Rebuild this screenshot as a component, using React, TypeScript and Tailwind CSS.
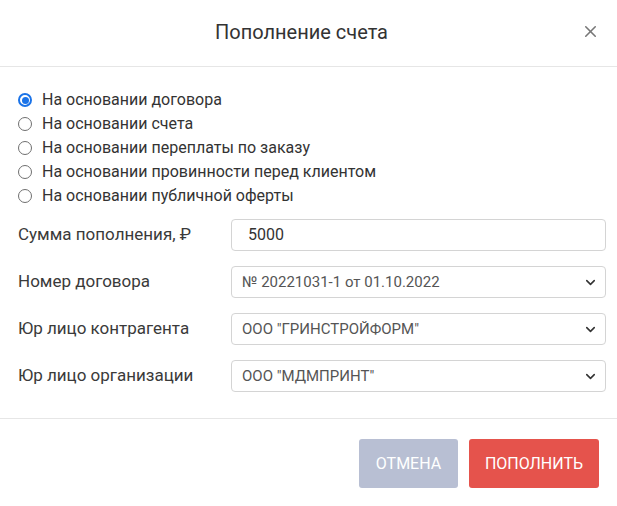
import { X, ChevronDown } from "lucide-react";

const options = [
  "На основании договора",
  "На основании счета",
  "На основании переплаты по заказу",
  "На основании провинности перед клиентом",
  "На основании публичной оферты",
];

const selects = [
  { label: "Номер договора", value: "№ 20221031-1 от 01.10.2022" },
  { label: "Юр лицо контрагента", value: 'ООО "ГРИНСТРОЙФОРМ"' },
  { label: "Юр лицо организации", value: 'ООО "МДМПРИНТ"' },
];

function Radio({ checked }: { checked: boolean }) {
  return checked ? (
    <span className="w-[14px] h-[14px] rounded-full border-2 border-[#1a73e8] bg-white flex items-center justify-center shrink-0">
      <span className="w-[7px] h-[7px] rounded-full bg-[#1a73e8]" />
    </span>
  ) : (
    <span className="w-[14px] h-[14px] rounded-full border-[1.5px] border-[#6f6f6f] bg-white shrink-0" />
  );
}

export default function App() {
  return (
    <div
      className="w-[617px] h-[506px] bg-white text-[#333] flex flex-col"
      style={{ fontFamily: "Roboto, sans-serif" }}
    >
      {/* Header */}
      <div className="relative h-[67px] border-b border-[#e6e6e6] flex items-center justify-center shrink-0">
        <h2 className="text-[20px] text-[#333] pr-[14px] pb-[3px]">Пополнение счета</h2>
        <button className="absolute right-[17px] top-[22px] text-[#777]">
          <X size={19} strokeWidth={2} />
        </button>
      </div>

      {/* Body */}
      <div className="flex-1 flex flex-col pl-[18px] pr-[11px] pt-[21px]">
        <div className="flex flex-col">
          {options.map((o, i) => (
            <label key={o} className="h-[24px] flex items-center gap-[10px] text-[16px] text-[#333]">
              <Radio checked={i === 0} />
              <span>{o}</span>
            </label>
          ))}
        </div>

        <div className="mt-[11px] flex flex-col gap-[15px]">
          <div className="flex items-center h-[32px]">
            <span className="w-[213px] text-[17px] text-[#3a3a3a]">Сумма пополнения, ₽</span>
            <div className="flex-1 h-[32px] border border-[#d4d4d4] rounded-[4px] flex items-center pl-[16px] text-[16px] text-[#333]">
              5000
            </div>
          </div>
          {selects.map((s) => (
            <div key={s.label} className="flex items-center h-[32px]">
              <span className="w-[213px] text-[17px] text-[#3a3a3a]">{s.label}</span>
              <div className="flex-1 h-[32px] border border-[#d4d4d4] rounded-[4px] flex items-center pl-[10px] pr-[7px] text-[15px] text-[#555]">
                <span className="flex-1">{s.value}</span>
                <ChevronDown size={15} strokeWidth={2.5} className="text-[#333]" />
              </div>
            </div>
          ))}
        </div>
      </div>

      {/* Footer */}
      <div className="h-[88px] border-t border-[#e6e6e6] flex justify-end items-start gap-[11px] pt-[20px] pr-[18px] shrink-0">
        <button className="w-[99px] h-[49px] rounded-[3px] bg-[#b8bfd3] text-white text-[16px]">
          ОТМЕНА
        </button>
        <button className="w-[130px] h-[49px] rounded-[3px] bg-[#e5534c] text-white text-[16px]">
          ПОПОЛНИТЬ
        </button>
      </div>
    </div>
  );
}
